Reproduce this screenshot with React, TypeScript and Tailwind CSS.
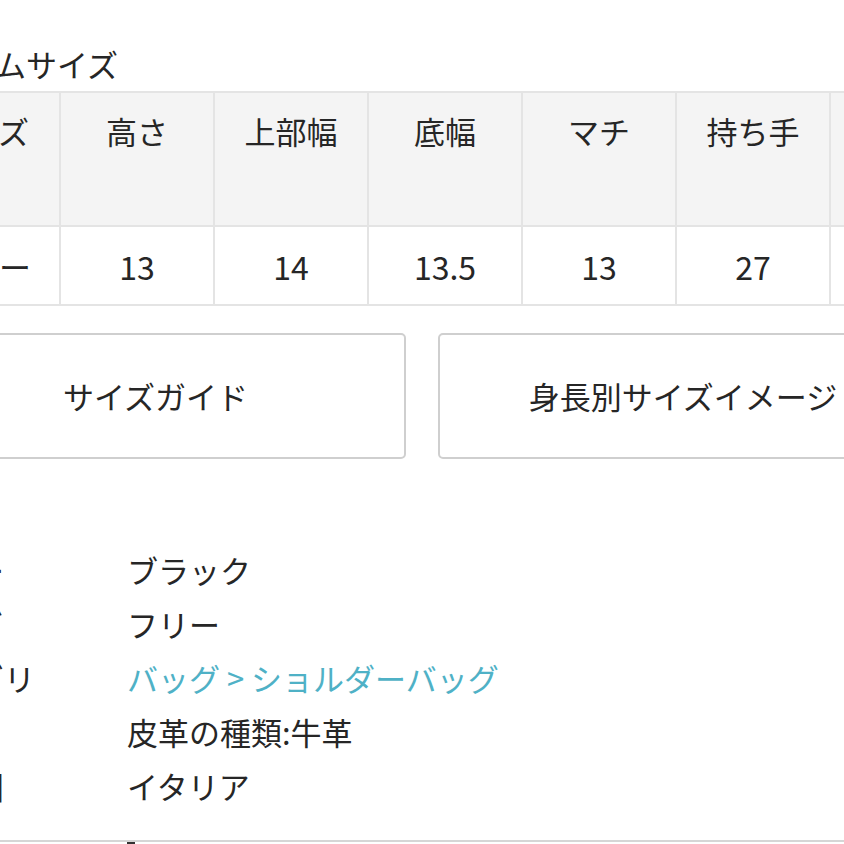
import React from "react";

const headers = ["サイズ", "高さ", "上部幅", "底幅", "マチ", "持ち手", "ショルダー"];
const values = ["フリー", "13", "14", "13.5", "13", "27", "120"];

const details: { label: string; value: string; link?: boolean }[] = [
  { label: "カラー", value: "ブラック" },
  { label: "サイズ", value: "フリー" },
  { label: "カテゴリ", value: "バッグ > ショルダーバッグ", link: true },
  { label: "素材", value: "皮革の種類:牛革" },
  { label: "原産国", value: "イタリア" },
];

export default function App() {
  return (
    <div
      className="w-[844px] h-[844px] overflow-hidden bg-white text-[#262626]"
      style={{ fontFamily: '"Noto Sans CJK JP", "Noto Sans", sans-serif' }}
    >
      <div className="-ml-[95px] w-[1100px] pt-[44px]">
        <h2 className="text-[31px] leading-[40px] font-normal">アイテムサイズ</h2>

        <table className="mt-[7px] border-collapse table-fixed">
          <tbody>
            <tr>
              {headers.map((h) => (
                <th
                  key={h}
                  className="w-[154px] h-[134px] align-top pt-[18px] border-2 border-[#e4e4e4] bg-[#f4f4f4] text-[31px] leading-[40px] font-normal"
                >
                  {h}
                </th>
              ))}
            </tr>
            <tr>
              {values.map((v, i) => (
                <td
                  key={i}
                  className="w-[154px] h-[79px] text-center border-2 border-[#e4e4e4] text-[32px] leading-[40px]"
                >
                  {v}
                </td>
              ))}
            </tr>
          </tbody>
        </table>

        <div className="mt-[27px] flex gap-[32px]">
          <button className="w-[501px] h-[126px] rounded-[5px] border-2 border-[#cfcfcf] bg-white text-[31px]">
            サイズガイド
          </button>
          <button className="w-[490px] h-[126px] rounded-[5px] border-2 border-[#cfcfcf] bg-white text-[31px]">
            身長別サイズイメージ
          </button>
        </div>

        <div className="mt-[84px]">
          {details.map((d) => (
            <div key={d.label} className="flex h-[54px] items-center text-[31px] leading-[54px]">
              <div className="w-[222px] pl-[6px] shrink-0">{d.label}</div>
              <div className={d.link ? "text-[#4fb1c6]" : ""}>{d.value}</div>
            </div>
          ))}
        </div>

        <div className="mt-[27px] border-t-2 border-[#d6d6d6] flex">
          <div className="ml-[222px] w-[8px] h-[4px] bg-[#333]" />
        </div>
      </div>
    </div>
  );
}
